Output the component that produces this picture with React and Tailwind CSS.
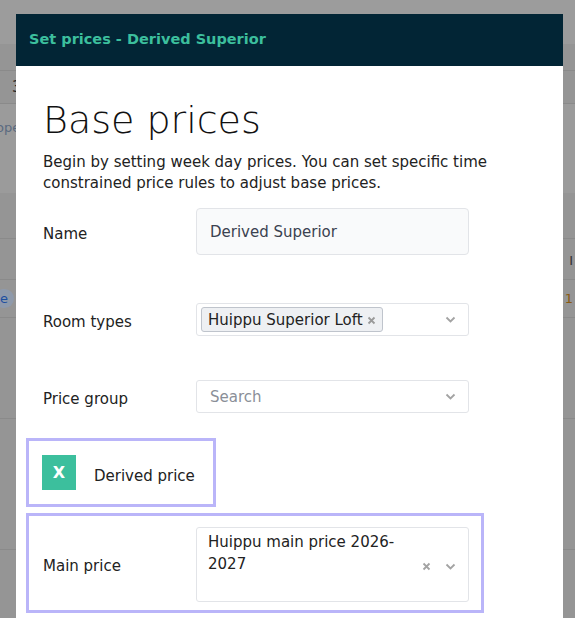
import React from "react";

const font = { fontFamily: '"DejaVu Sans", "Liberation Sans", sans-serif' };

function Chevron() {
  return (
    <svg width="11" height="7" viewBox="0 0 11 7" className="shrink-0">
      <path d="M1.5 1.5 L5.5 5.5 L9.5 1.5" fill="none" stroke="#a3a3a3" strokeWidth="1.8" />
    </svg>
  );
}

function Cross({ color = "#a3a3a3" }) {
  return (
    <svg width="9" height="9" viewBox="0 0 9 9" className="shrink-0">
      <path d="M1.5 1.5 L7.5 7.5 M7.5 1.5 L1.5 7.5" fill="none" stroke={color} strokeWidth="1.8" />
    </svg>
  );
}

function Row({ label, children, className = "" }) {
  return (
    <div className={`flex items-center ${className}`}>
      <div className="w-[153px] shrink-0 pt-[6px] text-[15px] text-[#222]">{label}</div>
      {children}
    </div>
  );
}

export default function App() {
  return (
    <div className="relative h-[618px] w-[575px] overflow-hidden bg-[#959595]" style={font}>
      {/* page behind the dialog, dimmed */}
      <div className="flex flex-col text-[#555]">
        <div className="h-[44px] bg-[#9c9c9c]" />
        <div className="h-[26px]" />
        <div className="flex h-[33px] items-center border-t border-[#8a8a8a] pl-[12px] text-[15px] text-[#222]">
          3
        </div>
        <div className="flex h-[90px] items-start border-t border-[#8a8a8a] bg-[#9b9b9b] pt-[14px] text-[13px] text-[#5a6a80]">
          <span className="-ml-[4px]">ope</span>
        </div>
        <div className="h-[45px]" />
        <div className="flex h-[41px] items-start justify-between border-t border-[#8a8a8a]">
          <span />
          <span className="mr-[2px] mt-[12px] text-[13px] text-[#333]">I</span>
        </div>
        <div className="flex h-[38px] items-center justify-between border-t border-[#8a8a8a]">
          <span className="-ml-[6px] rounded-full bg-[#8f9aab] px-[6px] text-[13px] text-[#1d4fa0]">e</span>
          <span className="mr-[2px] text-[13px] text-[#8a5a10]">1</span>
        </div>
        <div className="h-[101px] border-t border-[#8a8a8a]" />
        <div className="h-[131px] border-t border-[#8a8a8a]" />
        <div className="border-t border-[#8a8a8a]" />
      </div>

      {/* dialog */}
      <div className="absolute left-[16px] top-[14px] h-[620px] w-[547px] bg-white">
        <div className="flex h-[52px] items-center bg-[#022535] px-[13px]">
          <span className="text-[14.5px] font-bold text-[#3cbf9d]">Set prices - Derived Superior</span>
        </div>

        <div className="px-[10px]">
          <div className="px-[17px] pt-[32px]">
            <h1 className="text-[38px] font-extralight leading-[44px] text-[#111]">Base prices</h1>
            <p className="mt-[10px] text-[15px] leading-[21px] text-[#222]">
              Begin by setting week day prices. You can set specific time constrained price rules to adjust base prices.
            </p>

            <Row label="Name" className="mt-[14px]">
              <div className="flex h-[47px] w-[273px] items-center rounded-[4px] border border-[#e2e4e8] bg-[#f9fafb] px-[13px] pt-[2px] text-[15px] text-[#3b4250]">
                Derived Superior
              </div>
            </Row>

            <Row label="Room types" className="mt-[48px]">
              <div className="flex h-[33px] w-[273px] items-center rounded-[3px] border border-[#e2e4e8] bg-white pl-[4px] pr-[12px]">
                <div className="flex h-[25px] items-center gap-[4px] rounded-[3px] border border-[#bfc4cc] bg-[#eef0f3] px-[6px] pt-[1px] text-[15px] text-[#222]">
                  Huippu Superior Loft
                  <Cross color="#9a9a9a" />
                </div>
                <div className="flex-1" />
                <Chevron />
              </div>
            </Row>

            <Row label="Price group" className="mt-[44px]">
              <div className="flex h-[33px] w-[273px] items-center rounded-[3px] border border-[#e2e4e8] bg-white pl-[13px] pr-[12px]">
                <span className="flex-1 pt-[2px] text-[15px] text-[#8a8f98]">Search</span>
                <Chevron />
              </div>
            </Row>
          </div>

          <div className="mt-[25px] flex w-[190px] items-center gap-[18px] border-[3px] border-[#bab5f9] px-[13px] py-[14px]">
            <div className="flex h-[35px] w-[34px] items-center justify-center bg-[#3cbf9d] text-[16px] font-bold text-white">
              X
            </div>
            <span className="pt-[7px] text-[15px] text-[#222]">Derived price</span>
          </div>

          <div className="mt-[6px] flex w-[458px] items-center border-[3px] border-[#bab5f9] pb-[8px] pl-[14px] pt-[11px]">
            <div className="w-[153px] shrink-0 pt-[4px] text-[15px] text-[#222]">Main price</div>
            <div className="flex h-[75px] w-[273px] rounded-[3px] border border-[#e2e4e8] bg-white pl-[11px] pr-[12px] pt-[3px]">
              <div className="w-[200px] text-[15px] leading-[22px] text-[#222]">Huippu main price 2026-2027</div>
              <div className="flex flex-1 items-center justify-end gap-[14px]">
                <Cross />
                <Chevron />
              </div>
            </div>
          </div>
        </div>
      </div>
    </div>
  );
}
